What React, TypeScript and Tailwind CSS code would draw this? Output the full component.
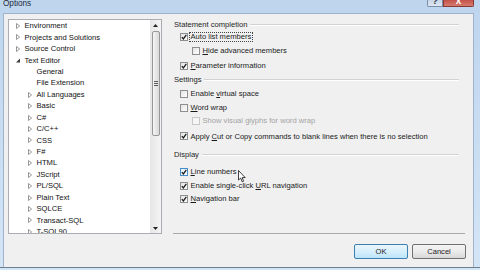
import React from 'react';

type Arrow = 'closed' | 'open' | null;
const tree: { t: string; lvl: 0 | 1; arrow: Arrow }[] = [
  { t: 'Environment', lvl: 0, arrow: 'closed' },
  { t: 'Projects and Solutions', lvl: 0, arrow: 'closed' },
  { t: 'Source Control', lvl: 0, arrow: 'closed' },
  { t: 'Text Editor', lvl: 0, arrow: 'open' },
  { t: 'General', lvl: 1, arrow: null },
  { t: 'File Extension', lvl: 1, arrow: null },
  { t: 'All Languages', lvl: 1, arrow: 'closed' },
  { t: 'Basic', lvl: 1, arrow: 'closed' },
  { t: 'C#', lvl: 1, arrow: 'closed' },
  { t: 'C/C++', lvl: 1, arrow: 'closed' },
  { t: 'CSS', lvl: 1, arrow: 'closed' },
  { t: 'F#', lvl: 1, arrow: 'closed' },
  { t: 'HTML', lvl: 1, arrow: 'closed' },
  { t: 'JScript', lvl: 1, arrow: 'closed' },
  { t: 'PL/SQL', lvl: 1, arrow: 'closed' },
  { t: 'Plain Text', lvl: 1, arrow: 'closed' },
  { t: 'SQLCE', lvl: 1, arrow: 'closed' },
  { t: 'Transact-SQL', lvl: 1, arrow: 'closed' },
  { t: 'T-SQL90', lvl: 1, arrow: 'closed' },
];

function TreeArrow({ kind }: { kind: Arrow }) {
  if (kind === 'closed')
    return (
      <svg width="4" height="6" viewBox="0 0 4 6" className="shrink-0">
        <polygon points="0.5,0.5 3.6,3 0.5,5.5" fill="#fff" stroke="#8c8c8c" strokeWidth="0.9" />
      </svg>
    );
  if (kind === 'open')
    return (
      <svg width="4" height="6" viewBox="0 0 4 6" className="shrink-0">
        <polygon points="4,1.5 4,5.5 0,5.5" fill="#3a3a3a" />
      </svg>
    );
  return <span className="w-[4px] shrink-0" />;
}

function Check({ checked, disabled, hover }: { checked?: boolean; disabled?: boolean; hover?: boolean }) {
  const box = disabled
    ? 'border-[#c9c9c9] bg-[#f6f6f6]'
    : hover
    ? 'border-[#4a8cc4] bg-gradient-to-br from-[#dff0fc] to-[#f8fcff]'
    : 'border-[#8e8f8f] bg-gradient-to-br from-[#e3e3e3] to-[#ffffff]';
  return (
    <span className={`w-[8px] h-[8px] shrink-0 border ${box} flex items-center justify-center`}>
      {checked && (
        <svg width="6" height="6" viewBox="0 0 6 6">
          <path d="M0.8 3.1 L2.4 4.9 L5.3 0.9" fill="none" stroke="#1d1d1d" strokeWidth="1.3" />
        </svg>
      )}
    </span>
  );
}

function Header({ text, cls }: { text: string; cls: string }) {
  return (
    <div className={`${cls} flex items-center pl-[12px] pr-[14px]`}>
      <span className="text-[#1e1e1e] whitespace-nowrap">{text}</span>
      <span className="flex-1 ml-[3px] h-[2px] border-t border-[#d2d2d2] border-b-white" style={{ borderBottomWidth: 1 }} />
    </div>
  );
}

export default function App() {
  return (
    <div className="w-[480px] h-[270px] overflow-hidden flex flex-col bg-gradient-to-b from-[#bed5ee] to-[#d4e5f6] font-['Liberation_Sans',Arial,sans-serif] text-[7.6px] leading-none text-[#1a1a1a]">
      {/* Title bar */}
      <div className="h-[13px] flex items-start shrink-0">
        <span className="ml-[3px] mt-[0px] text-[8.2px] text-[#1e2a3a]">Options</span>
        <div className="ml-auto mr-[6px] flex">
          <div className="w-[16px] h-[7px] border border-t-0 border-[#7b8ea8] bg-gradient-to-b from-[#c9d6e6] to-[#dfe8f3] rounded-bl-[2px] flex justify-center overflow-hidden">
            <span className="text-[9px] font-bold text-[#2a3440] -mt-[3px]">?</span>
          </div>
          <div className="w-[31px] h-[7px] border border-t-0 border-[#8a3a35] bg-gradient-to-b from-[#c4534a] to-[#d67a6f] rounded-br-[2px] flex justify-center overflow-hidden">
            <span className="text-[10px] font-bold text-white -mt-[4px]">x</span>
          </div>
        </div>
      </div>

      <div className="flex flex-1 min-h-0">
        <div className="w-[3px] shrink-0" />
        {/* Client */}
        <div className="flex-1 bg-[#f0f0f0] border-t border-l border-r border-[#9fb4cc] flex flex-col">
          <div className="h-[220px] flex shrink-0">
            {/* Tree */}
            <div className="ml-[4px] mt-[5px] w-[154px] h-[215px] border border-[#abadb3] bg-white flex overflow-hidden">
              <div className="flex-1 pt-[0.3px] overflow-hidden">
                {tree.map((it) => (
                  <div
                    key={it.t}
                    className={`h-[11.45px] flex items-center whitespace-nowrap ${it.lvl === 0 ? 'pl-[7px]' : 'pl-[19px]'}`}
                  >
                    <TreeArrow kind={it.arrow} />
                    <span className="ml-[4.5px] text-[#111]">{it.t}</span>
                  </div>
                ))}
              </div>
              {/* Scrollbar */}
              <div className="w-[11px] bg-gradient-to-r from-[#e6e6e6] to-[#f4f4f4] flex flex-col items-center">
                <div className="h-[11px] flex items-center justify-center">
                  <svg width="5" height="3" viewBox="0 0 5 3">
                    <polygon points="0,3 2.5,0 5,3" fill="#222" />
                  </svg>
                </div>
                <div className="w-[8px] h-[105px] border border-[#979797] rounded-[2px] bg-gradient-to-r from-[#f5f5f5] to-[#d9d9d9] flex flex-col items-center justify-center gap-[1px]">
                  <span className="w-[4px] h-[1px] bg-[#5d5d5d]" />
                  <span className="w-[4px] h-[1px] bg-[#5d5d5d]" />
                  <span className="w-[4px] h-[1px] bg-[#5d5d5d]" />
                </div>
                <div className="flex-1" />
                <div className="h-[10px] flex items-center justify-center">
                  <svg width="5" height="3" viewBox="0 0 5 3">
                    <polygon points="0,0 2.5,3 5,0" fill="#222" />
                  </svg>
                </div>
              </div>
            </div>

            {/* Right panel */}
            <div className="flex-1 flex flex-col pt-[4.6px] relative">
              <Header text="Statement completion" cls="h-[11.9px]" />
              <div className="h-[13.4px] flex items-center pl-[18px]">
                <Check checked />
                <span className="ml-[1px] border border-dotted border-[#444] px-[0.5px] py-[0.3px]">Auto list members</span>
              </div>
              <div className="h-[14.75px] flex items-center pl-[30px]">
                <Check />
                <span className="ml-[2.5px]"><u>H</u>ide advanced members</span>
              </div>
              <div className="h-[14.5px] flex items-center pl-[18px]">
                <Check checked />
                <span className="ml-[2.5px]"><u>P</u>arameter information</span>
              </div>
              <Header text="Settings" cls="h-[14px]" />
              <div className="h-[13.75px] flex items-center pl-[18px]">
                <Check />
                <span className="ml-[2.5px]">Enable <u>v</u>irtual space</span>
              </div>
              <div className="h-[13.5px] flex items-center pl-[18px]">
                <Check />
                <span className="ml-[2.5px]"><u>W</u>ord wrap</span>
              </div>
              <div className="h-[13px] flex items-center pl-[30px]">
                <Check disabled />
                <span className="ml-[2.5px] text-[#a3a3a3]">Show visual glyphs for word wrap</span>
              </div>
              <div className="h-[18px] flex items-center pl-[18px]">
                <Check checked />
                <span className="ml-[2.5px] whitespace-nowrap">Apply <u>C</u>ut or Copy commands to blank lines when there is no selection</span>
              </div>
              <Header text="Display" cls="h-[19.25px]" />
              <div className="h-[14.25px] flex items-center pl-[18px]">
                <Check checked hover />
                <span className="ml-[2.5px]"><u>L</u>ine numbers</span>
              </div>
              <div className="h-[13.25px] flex items-center pl-[18px]">
                <Check checked />
                <span className="ml-[2.5px]">Enable single-click <u>U</u>RL navigation</span>
              </div>
              <div className="h-[13.5px] flex items-center pl-[18px]">
                <Check checked />
                <span className="ml-[2.5px]"><u>N</u>avigation bar</span>
              </div>
              <div className="flex-1" />
              <div className="ml-[11px] mr-[8px] h-[1px] bg-[#a9a9a9]" />

              {/* mouse cursor */}
              <svg className="absolute left-[76px] top-[156px]" width="8" height="13" viewBox="0 0 8 13">
                <path d="M0.5 0.5 L0.5 10 L2.7 8 L4.2 11.8 L5.6 11.2 L4.2 7.6 L7.2 7.6 Z" fill="#fff" stroke="#111" strokeWidth="0.8" />
              </svg>
            </div>
          </div>

          {/* Buttons */}
          <div className="flex justify-end gap-[4px] pr-[7px] pt-[10px]">
            <div className="w-[54px] h-[15px] rounded-[2px] border border-[#3c7fb1] bg-gradient-to-b from-[#eaf6fd] via-[#d7effc] to-[#bce4fa] flex items-center justify-center">
              OK
            </div>
            <div className="w-[54px] h-[15px] rounded-[2px] border border-[#707070] bg-gradient-to-b from-[#f4f4f4] via-[#ebebeb] to-[#d8d8d8] flex items-center justify-center">
              Cancel
            </div>
          </div>
        </div>
        <div className="w-[6px] shrink-0" />
      </div>
      <div className="h-[3px] shrink-0 border-t border-[#6f7f92]" />
    </div>
  );
}
